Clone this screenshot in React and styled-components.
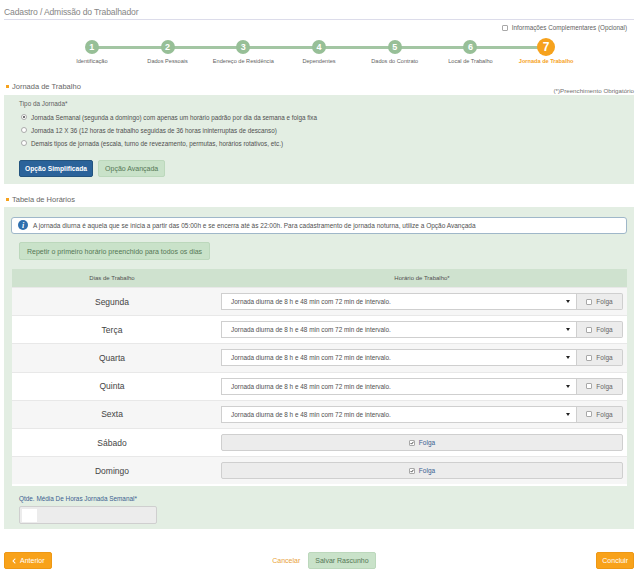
import React from 'react';
import styled, { createGlobalStyle } from 'styled-components';
import { FaChevronLeft } from 'react-icons/fa';

const GlobalStyle = createGlobalStyle`
  body {
    margin: 0;
    background: #fff;
    font-family: "Liberation Sans", Arial, sans-serif;
    color: #555;
  }
  * { box-sizing: border-box; }
`;

const Page = styled.div`
  width: 640px;
  padding: 7px 6px 0 4px;
`;

const Title = styled.div`
  font-size: 8.6px;
  line-height: 11px;
  color: #868686;
  letter-spacing: -0.15px;
  padding-bottom: 1px;
  border-bottom: 1px solid #dcdcea;
`;

const OptionalRow = styled.div`
  display: flex;
  justify-content: flex-end;
  align-items: center;
  gap: 4px;
  margin-top: 4px;
  padding-right: 7px;
  font-size: 6.3px;
  line-height: 8px;
  color: #5f5f5f;
`;

const Box = styled.span`
  display: inline-flex;
  align-items: center;
  justify-content: center;
  width: ${p => p.size || 6}px;
  height: ${p => p.size || 6}px;
  border: 1px solid #a8a8a8;
  border-radius: 1px;
  background: #fff;
  flex: none;
`;

const Stepper = styled.div`
  display: flex;
  margin: 8px 0 0 50px;
  width: 530px;
`;

const Step = styled.div`
  flex: 1;
  display: flex;
  flex-direction: column;
  align-items: center;
  position: relative;

  & + &::before {
    content: '';
    position: absolute;
    top: 5.5px;
    left: -50%;
    right: 50%;
    height: 3px;
    background: #a3c6a3;
  }
`;

const Circle = styled.div`
  position: relative;
  z-index: 1;
  width: ${p => (p.active ? 18 : 14)}px;
  height: ${p => (p.active ? 18 : 14)}px;
  margin: ${p => (p.active ? '-2px 0' : '0')};
  border-radius: 50%;
  background: ${p => (p.active ? '#f6a21d' : '#97bf97')};
  color: #fff;
  font-size: ${p => (p.active ? 12 : 9)}px;
  font-weight: bold;
  display: flex;
  align-items: center;
  justify-content: center;
`;

const StepLabel = styled.div`
  margin-top: 3.5px;
  font-size: 5.6px;
  line-height: 7px;
  white-space: nowrap;
  color: ${p => (p.active ? '#f6a21d' : '#5f5f5f')};
  font-weight: ${p => (p.active ? 'bold' : 'normal')};
`;

const SectionHead = styled.div`
  display: flex;
  justify-content: space-between;
  align-items: flex-end;
  margin-top: ${p => p.top}px;
`;

const SectionTitle = styled.div`
  display: flex;
  align-items: center;
  gap: 3px;
  padding-left: 2px;
  font-size: 7.5px;
  line-height: 10px;
  color: #666;

  &::before {
    content: '';
    width: 3px;
    height: 3px;
    background: #f6a21d;
  }
`;

const Required = styled.div`
  font-size: 6.2px;
  line-height: 8px;
  color: #707070;
  margin-bottom: -3px;
`;

const Panel = styled.div`
  background: #e3eee3;
  margin-top: ${p => p.top || 3}px;
  padding: ${p => p.pad};
`;

const FieldLabel = styled.div`
  font-size: 6.4px;
  line-height: 8px;
  color: ${p => (p.blue ? '#3c6190' : '#5f5f5f')};
`;

const RadioList = styled.div`
  margin-top: 3px;
  padding-left: 2px;
`;

const RadioRow = styled.div`
  display: flex;
  align-items: center;
  gap: 4px;
  height: 13px;
  font-size: 6.3px;
  color: #4f4f4f;
`;

const Radio = styled.span`
  width: 6px;
  height: 6px;
  border-radius: 50%;
  border: 1px solid #aaa;
  background: #fff;
  display: flex;
  align-items: center;
  justify-content: center;
  flex: none;

  &::after {
    content: '';
    width: 2.5px;
    height: 2.5px;
    border-radius: 50%;
    background: ${p => (p.checked ? '#444' : 'transparent')};
  }
`;

const ButtonRow = styled.div`
  display: flex;
  gap: 5px;
  margin-top: 10px;
`;

const Button = styled.div`
  display: inline-flex;
  align-items: center;
  justify-content: center;
  gap: 3px;
  height: ${p => p.h || 17}px;
  padding: 0 ${p => p.px || 6}px;
  border-radius: 2px;
  font-size: ${p => p.fs || 7}px;
  white-space: nowrap;
  ${p => p.variant === 'primary' && `
    background: #2b639a;
    border: 1px solid #23547f;
    color: #fff;
    font-weight: bold;
  `}
  ${p => p.variant === 'soft' && `
    background: #c9e2c9;
    border: 1px solid #bcd8bc;
    color: #557755;
  `}
  ${p => p.variant === 'orange' && `
    background: #f8a21a;
    border: 1px solid #ee9814;
    color: #fff;
  `}
`;

const InfoBox = styled.div`
  display: flex;
  align-items: center;
  gap: 5px;
  height: 17px;
  padding-left: 6px;
  background: #fff;
  border: 1px solid #9fb7c9;
  border-radius: 3px;
  font-size: 6.5px;
  color: #505050;
`;

const InfoIcon = styled.span`
  width: 10px;
  height: 10px;
  border-radius: 50%;
  background: #2f6fae;
  color: #fff;
  font: italic bold 8px "Liberation Serif", serif;
  display: flex;
  align-items: center;
  justify-content: center;
`;

const Indent = styled.div`
  padding-left: 8px;
  margin-top: ${p => p.top}px;
`;

const Table = styled.div`
  margin: 9px 0 0 1px;
  background: #fff;
  padding-bottom: 2px;
`;

const Row = styled.div`
  display: grid;
  grid-template-columns: 200px 1fr;
  column-gap: 9px;
  align-items: center;
  padding-right: 4px;
  height: ${p => (p.head ? 18 : 28.2)}px;
  background: ${p => (p.head ? '#cfe2cf' : p.shade ? '#f6f6f6' : '#fff')};
  border-top: ${p => (p.head ? 'none' : '1px solid #e8e8e8')};
`;

const HeadCell = styled.div`
  text-align: center;
  font-size: 6px;
  color: #505050;
`;

const Day = styled.div`
  text-align: center;
  font-size: 8.5px;
  color: #444;
`;

const Control = styled.div`
  display: flex;
  height: 17px;
`;

const Select = styled.div`
  flex: 1;
  display: flex;
  align-items: center;
  justify-content: space-between;
  padding: 0 6px 0 9px;
  background: #fff;
  border: 1px solid #cfcfcf;
  font-size: 6.4px;
  color: #505050;

  &::after {
    content: '';
    border-left: 2px solid transparent;
    border-right: 2px solid transparent;
    border-top: 3px solid #222;
  }
`;

const Addon = styled.div`
  width: ${p => (p.full ? 'auto' : '46px')};
  flex: ${p => (p.full ? 1 : 'none')};
  display: flex;
  align-items: center;
  justify-content: center;
  gap: 4px;
  background: #ececec;
  border: 1px solid #cfcfcf;
  border-left: ${p => (p.full ? '1px solid #cfcfcf' : 'none')};
  border-radius: ${p => (p.full ? '2px' : '0 2px 2px 0')};
  font-size: 6.5px;
  color: ${p => (p.full ? '#3c6190' : '#666')};
`;

const HoursInput = styled.div`
  margin-top: 3px;
  width: 138px;
  height: 18px;
  background: #ececec;
  border: 1px solid #cfcfcf;
  border-radius: 2px;
  padding: 2px 0 0 2px;

  &::before {
    content: '';
    display: block;
    width: 15px;
    height: 13px;
    background: #fff;
  }
`;

const Footer = styled.div`
  display: flex;
  justify-content: space-between;
  align-items: center;
  margin-top: 23px;
`;

const Middle = styled.div`
  display: flex;
  align-items: center;
  gap: 8px;
`;

const LinkText = styled.span`
  font-size: 7px;
  color: #e9a23a;
`;

const Tick = () => (
  <svg width="6" height="6" viewBox="0 0 10 10">
    <path d="M1.5 5.2 L4 7.8 L8.8 1.8" fill="none" stroke="#222" strokeWidth="2" />
  </svg>
);

const steps = [
  'Identificação',
  'Dados Pessoais',
  'Endereço de Residência',
  'Dependentes',
  'Dados do Contrato',
  'Local de Trabalho',
  'Jornada de Trabalho',
];

const radios = [
  'Jornada Semanal (segunda a domingo) com apenas um horário padrão por dia da semana e folga fixa',
  'Jornada 12 X 36 (12 horas de trabalho seguidas de 36 horas ininterruptas de descanso)',
  'Demais tipos de jornada (escala, turno de revezamento, permutas, horários rotativos, etc.)',
];

const days = [
  { name: 'Segunda' },
  { name: 'Terça' },
  { name: 'Quarta' },
  { name: 'Quinta' },
  { name: 'Sexta' },
  { name: 'Sábado', off: true },
  { name: 'Domingo', off: true },
];

export default function App() {
  return (
    <Page>
      <GlobalStyle />
      <Title>Cadastro / Admissão do Trabalhador</Title>

      <OptionalRow>
        <Box />
        Informações Complementares (Opcional)
      </OptionalRow>

      <Stepper>
        {steps.map((s, i) => {
          const active = i === steps.length - 1;
          return (
            <Step key={s}>
              <Circle active={active}>{i + 1}</Circle>
              <StepLabel active={active}>{s}</StepLabel>
            </Step>
          );
        })}
      </Stepper>

      <SectionHead top={17}>
        <SectionTitle>Jornada de Trabalho</SectionTitle>
        <Required>(*)Preenchimento Obrigatório</Required>
      </SectionHead>

      <Panel pad="5px 16px 7px 15px">
        <FieldLabel>Tipo da Jornada*</FieldLabel>
        <RadioList>
          {radios.map((r, i) => (
            <RadioRow key={r}>
              <Radio checked={i === 0} />
              {r}
            </RadioRow>
          ))}
        </RadioList>
        <ButtonRow>
          <Button variant="primary" px={5} fs={6.7}>Opção Simplificada</Button>
          <Button variant="soft" px={6} fs={7}>Opção Avançada</Button>
        </ButtonRow>
      </Panel>

      <SectionHead top={11}>
        <SectionTitle>Tabela de Horários</SectionTitle>
      </SectionHead>

      <Panel top={2} pad="10px 7px 5px 7px">
        <InfoBox>
          <InfoIcon>i</InfoIcon>
          A jornada diurna é aquela que se inicia a partir das 05:00h e se encerra até às 22:00h. Para cadastramento de jornada noturna, utilize a Opção Avançada
        </InfoBox>
        <Indent top={6}>
          <Button variant="soft" h={18} px={7}>Repetir o primeiro horário preenchido para todos os dias</Button>
        </Indent>

        <Table>
          <Row head>
            <HeadCell>Dias de Trabalho</HeadCell>
            <HeadCell>Horário de Trabalho*</HeadCell>
          </Row>
          {days.map((d, i) => (
            <Row key={d.name} shade={i % 2 === 0}>
              <Day>{d.name}</Day>
              <Control>
                {d.off ? (
                  <Addon full>
                    <Box size={6}><Tick /></Box>
                    Folga
                  </Addon>
                ) : (
                  <>
                    <Select>Jornada diurna de 8 h e 48 min com 72 min de intervalo.</Select>
                    <Addon>
                      <Box size={6} />
                      Folga
                    </Addon>
                  </>
                )}
              </Control>
            </Row>
          ))}
        </Table>

        <Indent top={9}>
          <FieldLabel blue>Qtde. Média De Horas Jornada Semanal*</FieldLabel>
          <HoursInput />
        </Indent>
      </Panel>

      <Footer>
        <Button variant="orange" px={6}>
          <FaChevronLeft size={6} />
          Anterior
        </Button>
        <Middle>
          <LinkText>Cancelar</LinkText>
          <Button variant="soft" px={6}>Salvar Rascunho</Button>
        </Middle>
        <Button variant="orange" px={5}>Concluir</Button>
      </Footer>
    </Page>
  );
}
